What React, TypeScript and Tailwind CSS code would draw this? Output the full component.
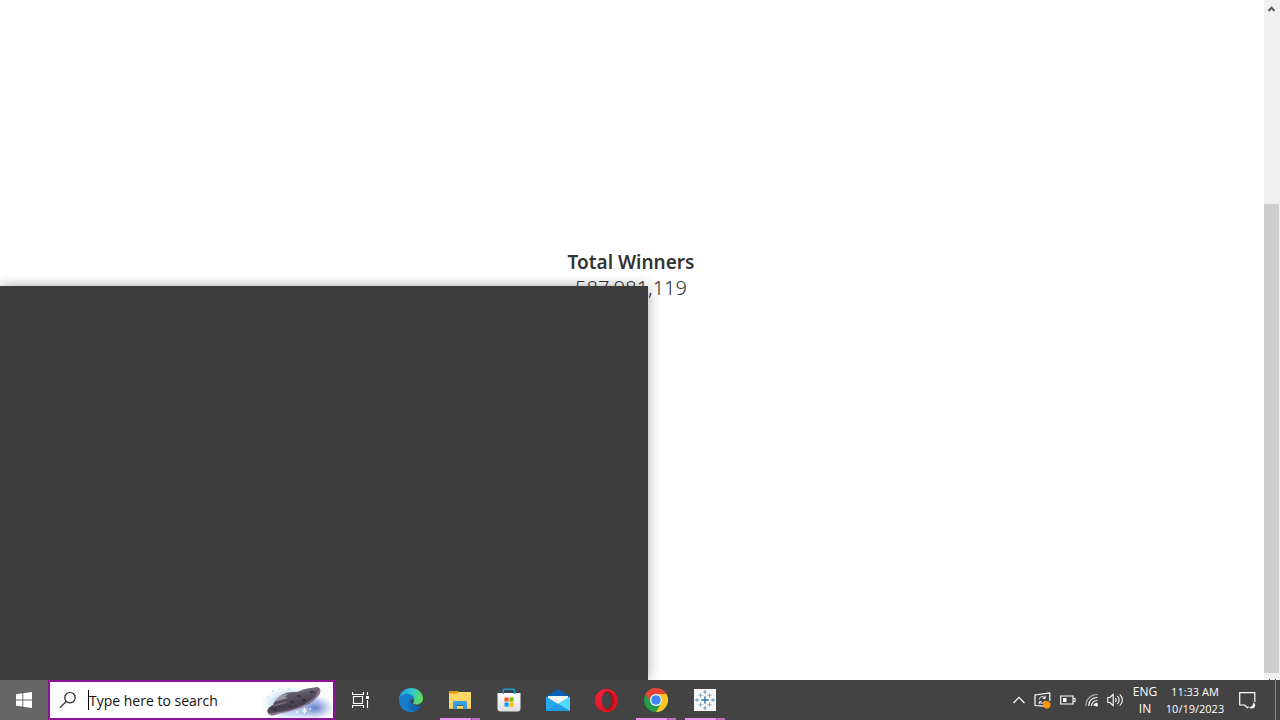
import type { ReactNode } from "react";

function WindowsLogo() {
  return (
    <svg width="16" height="16" viewBox="0 0 16 16" fill="#fff" aria-hidden="true">
      <path d="M0 2.2 6.4 1.3V7.4H0zM7.3 1.2 16 0V7.4H7.3zM0 8.4H6.4V14.6L0 13.7zM7.3 8.4H16V16L7.3 14.8z" />
    </svg>
  );
}

function SearchIcon() {
  return (
    <svg width="18" height="18" viewBox="0 0 18 18" fill="none" stroke="#222" strokeWidth="1.2" aria-hidden="true">
      <circle cx="11" cy="6.7" r="5.2" />
      <path d="M7.2 10.5 1 16.7" />
    </svg>
  );
}

function AsteroidArt() {
  return (
    <svg width="72" height="36" viewBox="0 0 72 36" className="shrink-0" aria-hidden="true">
      <defs>
        <radialGradient id="haze">
          <stop offset="0" stopColor="#7fa8dc" />
          <stop offset="0.6" stopColor="#a9cdec" stopOpacity="0.8" />
          <stop offset="1" stopColor="#fff" stopOpacity="0" />
        </radialGradient>
        <radialGradient id="hazeDeep">
          <stop offset="0" stopColor="#5f74c4" stopOpacity="0.9" />
          <stop offset="1" stopColor="#8fa5e5" stopOpacity="0" />
        </radialGradient>
        <linearGradient id="rock" x1="0.35" y1="0" x2="0.6" y2="1">
          <stop offset="0" stopColor="#8b8691" />
          <stop offset="0.3" stopColor="#5c5763" />
          <stop offset="0.65" stopColor="#413d4b" />
          <stop offset="1" stopColor="#76607f" />
        </linearGradient>
      </defs>
      <ellipse cx="34" cy="22" rx="37" ry="19" fill="url(#haze)" opacity="0.8" />
      <ellipse cx="54" cy="26" rx="20" ry="12" fill="url(#hazeDeep)" />
      <path d="M7 31C5 28 8 25 12 23 14 18 19 13 25 11 30 9 35 11 39 9 44 6 51 6 56 5 61 6 60 12 56 15 51 21 45 23 39 26 31 29 24 30 17 32 12 34 8 34 7 31Z" fill="url(#rock)" />
      <path d="M14 20C18 14 22 12 27 12L24 15 27 16 20 18Z" fill="#d1cbd3" opacity="0.55" />
      <path d="M12 24C17 22 21 22 26 20" fill="none" stroke="#b391b7" strokeWidth="1.5" opacity="0.45" />
      <path d="M8 32C16 32 22 30 29 29 39 26 48 21 55 15L59 8" fill="none" stroke="#bd93be" strokeWidth="1.6" opacity="0.65" />
      <g fill="#282631" opacity="0.55">
        <ellipse cx="14" cy="28" rx="2" ry="1.4" /><ellipse cx="31" cy="20" rx="2.2" ry="1.4" />
        <ellipse cx="38" cy="14" rx="2.5" ry="1.3" /><ellipse cx="43" cy="18" rx="2.4" ry="1.5" />
        <ellipse cx="51" cy="10" rx="2.5" ry="1.4" /><ellipse cx="29" cy="25" rx="2" ry="1" />
      </g>
      <path d="M43.5 25.5v6M41 27l5 3M46 27l-5 3" stroke="#fff" />
      <g fill="#fff"><circle cx="36" cy="30" r="0.9" /><circle cx="47" cy="34" r="0.8" /><circle cx="49" cy="27" r="0.8" /><circle cx="33" cy="34" r="0.7" /></g>
      <g fill="#a8def2"><circle cx="12" cy="9" r="1" /><circle cx="18" cy="7" r="0.8" /><circle cx="7" cy="15" r="0.8" /><circle cx="28" cy="7" r="0.8" /></g>
    </svg>
  );
}

function TaskViewIcon() {
  return (
    <svg width="17" height="16" viewBox="0 0 17 16" fill="none" stroke="#fff" aria-hidden="true">
      <path d="M.5 0V2.5H11.5V0M.5 16V13.5H11.5V16M1.5 4.5H10.5V11.5H1.5ZM15.5 0V3M15.5 8V16" strokeWidth="1.1" />
      <path d="M14 4H17V7H14Z" fill="#fff" stroke="none" />
    </svg>
  );
}

function EdgeIcon() {
  return (
    <svg width="24" height="24" viewBox="0 0 24 24" aria-hidden="true">
      <defs>
        <linearGradient id="edgeTop" x1="0" y1="0.4" x2="1" y2="0.6">
          <stop stopColor="#2696dc" /><stop offset="0.5" stopColor="#31c7cf" /><stop offset="1" stopColor="#69df4b" />
        </linearGradient>
        <linearGradient id="edgeBottom" x2="1" y2="1"><stop stopColor="#1684d4" /><stop offset="1" stopColor="#0c559e" /></linearGradient>
      </defs>
      <path d="M0 12C0 5 5 0 12 0S24 5 24 10.5C24 14 21 16.5 17.5 16.5 15 16.5 13.8 15.8 14.2 14.8 15.8 13 15 8 9.5 8 4 8 0 10 0 14Z" fill="url(#edgeTop)" />
      <path d="M0 12C1 8 4 5.8 8.3 5.8 13 5.8 16 9.5 15.3 13 14.8 11 12 10.4 10.5 12.3 7.5 16 12 21.5 20.8 20.2 17.8 23.2 15 24 12 24 5 24 0 19 0 12Z" fill="#147ecc" />
      <path d="M7.8 13.5C7.8 10.5 10 8.3 12.5 8.3 9 11 11 16 16 17.5 19 18.4 21.3 17.6 22.7 17 21.9 19.3 19 22.2 16 23.3 11 24 7.8 18.7 7.8 13.5Z" fill="url(#edgeBottom)" />
    </svg>
  );
}

function FolderIcon() {
  return (
    <svg width="22" height="18" viewBox="0 0 22 18" aria-hidden="true">
      <path d="M0 0H8.5L9.5 1H22V17.5H0Z" fill="#ffd767" />
      <path d="M0 0H8.5L9.5 1 8.5 2.5H0Z" fill="#e19b06" />
      <path d="M0 17H22v1H0Z" fill="#eaba3d" />
      <path d="M4 18V11.5Q4 10 5.5 10H16.5Q18 10 18 11.5V18H14V14H8V18Z" fill="#3c9be1" />
      <path d="M8 14H14v1H8Z" fill="#246eaa" />
    </svg>
  );
}

function StoreIcon() {
  return (
    <svg width="24" height="24" viewBox="0 0 24 24" aria-hidden="true">
      <defs><linearGradient id="bag" x2="0" y2="1"><stop stopColor="#fff" /><stop offset="1" stopColor="#dedede" /></linearGradient></defs>
      <path d="M.5 5H23.5V20.5Q23.5 23.5 20.5 23.5H3.5Q.5 23.5.5 20.5Z" fill="url(#bag)" />
      <path d="M6.3 6V2.7Q6.3 1.3 7.7 1.3H16.3Q17.7 1.3 17.7 2.7V6" fill="none" stroke="#189edc" strokeWidth="1.5" />
      <path d="M7.5 9.5H11.6V13.6H7.5Z" fill="#f25022" /><path d="M12.5 9.5H16.6V13.6H12.5Z" fill="#7fba00" />
      <path d="M7.5 14.5H11.6V18.6H7.5Z" fill="#00a4ef" /><path d="M12.5 14.5H16.6V18.6H12.5Z" fill="#ffb900" />
    </svg>
  );
}

function MailIcon() {
  return (
    <svg width="24" height="22" viewBox="0 0 24 22" aria-hidden="true">
      <path d="M0 7.5 11 .5Q12 0 13 .5L24 7.5V10H0Z" fill="#0860b4" />
      <path d="M2 7H22V18H2Z" fill="#f5f3ef" />
      <path d="M0 7.5 24 22H0Z" fill="#28a8ea" /><path d="M24 7.5V22L10.5 15.5Z" fill="#50d9ff" />
      <path d="M0 22 12 14.8 24 22Z" fill="#219be3" />
    </svg>
  );
}

function OperaIcon() {
  return (
    <svg width="23" height="23" viewBox="0 0 23 23" aria-hidden="true">
      <defs><linearGradient id="opera" x2="1" y2="1"><stop stopColor="#ff2039" /><stop offset="1" stopColor="#cf1018" /></linearGradient></defs>
      <path d="M11.5 0A11.5 11.5 0 1 0 11.5 23 11.5 11.5 0 1 0 11.5 0ZM12.2 2.5C15.3 2.5 16.8 6.5 16.8 11.5S15.3 20.5 12.2 20.5 7 17 7 11.5 9 2.5 12.2 2.5Z" fill="url(#opera)" fillRule="evenodd" />
      <path d="M8.5 4.2C10 2 13.5 1.2 16 3.6 19.8 7 19.8 16 16 19.4 13.5 21.8 10 21 8.5 18.8 11 21 16.8 19.5 16.8 11.5S11 2 8.5 4.2Z" fill="#a80f18" />
    </svg>
  );
}

function ChromeIcon() {
  return (
    <svg width="24" height="24" viewBox="0 0 24 24" aria-hidden="true">
      <circle cx="12" cy="12" r="12" fill="#239d4a" />
      <path d="M1.6 6A12 12 0 0 1 22.4 6H12A6 6 0 0 0 6.8 15Z" fill="#e94335" />
      <path d="M22.4 6A12 12 0 0 1 12 24L17.2 15A6 6 0 0 0 12 6Z" fill="#fcc524" />
      <circle cx="12" cy="12" r="6" fill="#fff" /><circle cx="12" cy="12" r="4.8" fill="#4285f4" />
    </svg>
  );
}

function TableauIcon() {
  return (
    <svg width="22" height="22" viewBox="0 0 22 22" fill="none" aria-hidden="true">
      <path d="M0 0H22V22H0Z" fill="#f7f7f7" />
      <path d="M11 7.2V14.8M7.2 11H14.8" stroke="#2278a8" strokeWidth="1.3" />
      <path d="M6.5 4V8.5M4.2 6.2H8.8M15.5 4V8.5M13.2 6.2H17.8M6.5 13.5V18M4.2 15.8H8.8M15.5 13.5V18M13.2 15.8H17.8" stroke="#8aafc7" strokeWidth="1.1" />
      <path d="M11 1V5M9.3 3H12.7M11 17V21M9.3 19H12.7M3 9.3V12.7M1 11H5M19 9.3V12.7M17 11H21" stroke="#5f97b9" />
    </svg>
  );
}

function SyncIcon() {
  return (
    <svg width="18" height="17" viewBox="0 0 18 17" fill="none" stroke="#fff" aria-hidden="true">
      <path d="M10 14.2 1 13.5V3L15.8 1V9" strokeWidth="1.2" />
      <path d="M5.2 7.5C5.8 4.4 9.2 3.8 11 6M11.2 3.8V6.4H8.7M11.1 8.7C10.2 11.6 7.1 12 5.5 10M5.3 12.2V9.7H7.8" />
      <circle cx="12.8" cy="12.8" r="3.7" fill="#ff9800" stroke="none" />
    </svg>
  );
}

function BatteryIcon() {
  return (
    <svg width="16" height="10" viewBox="0 0 16 10" fill="none" stroke="#fff" aria-hidden="true">
      <path d="M.7 1H13V9H.7ZM13 3.5H15V6.5H13" strokeWidth="1.1" /><path d="M3 3H6.5V7H3Z" fill="#fff" stroke="none" />
    </svg>
  );
}

function WifiIcon() {
  return (
    <svg width="14" height="14" viewBox="0 0 14 14" fill="none" stroke="#fff" strokeWidth="1.2" aria-hidden="true">
      <path d="M.8 13C.8 6 6 1.5 12.5 1.5" stroke="#b5b5b5" /><path d="M3.6 13C4 8 7 4.5 12.5 4.5M6.4 13C6.7 9.7 8.8 7.5 12.5 7.5M9 13C9.2 11.5 10.2 10.3 12.5 10.3" />
      <circle cx="11.5" cy="12" r="1.5" fill="#fff" stroke="none" />
    </svg>
  );
}

function SoundIcon() {
  return (
    <svg width="17" height="14" viewBox="0 0 17 14" fill="none" stroke="#fff" strokeWidth="1.1" aria-hidden="true">
      <path d="M.8 4.5H3L6.2 1.3V12.7L3 9.5H.8ZM8.2 5C9.3 6.2 9.3 7.8 8.2 9M10.4 3.2C12.7 5.4 12.7 8.6 10.4 10.8M12.7 1.3C16.3 4.7 16.3 9.3 12.7 12.7" />
    </svg>
  );
}

function NotificationIcon() {
  return (
    <svg width="17" height="17" viewBox="0 0 17 17" fill="none" aria-hidden="true">
      <path d="M15.8 10V.7H.7V13H5.5L8.5 15.8 9.5 14.5" stroke="#fff" strokeWidth="1.2" />
      <path d="M14.4 10.2A3.4 3.4 0 1 1 10 15.2C13 15 14.5 13 14.4 10.2Z" fill="#fff" />
    </svg>
  );
}

const apps: { name: string; icon: ReactNode; running: boolean }[] = [
  { name: "Microsoft Edge", icon: <EdgeIcon />, running: false },
  { name: "File Explorer", icon: <FolderIcon />, running: true },
  { name: "Microsoft Store", icon: <StoreIcon />, running: false },
  { name: "Mail", icon: <MailIcon />, running: false },
  { name: "Opera", icon: <OperaIcon />, running: false },
  { name: "Chrome", icon: <ChromeIcon />, running: true },
  { name: "Tableau", icon: <TableauIcon />, running: true },
];

function Taskbar() {
  return (
    <footer className="relative z-10 flex h-10 shrink-0 items-stretch bg-[#434343] text-white">
      <button aria-label="Start" className="grid w-12 shrink-0 place-items-center bg-[#666]"><WindowsLogo /></button>
      <div className="flex w-[287px] shrink-0 items-center overflow-hidden border-2 border-[#891596] bg-white pl-[9px]">
        <label htmlFor="search"><SearchIcon /></label>
        <span className="ml-[11px] h-5 w-px shrink-0 bg-black" />
        <input id="search" aria-label="Search" placeholder="Type here to search" className="h-full w-0 min-w-0 flex-1 bg-transparent text-sm text-black outline-none placeholder:text-[#111]" />
        <AsteroidArt />
      </div>
      <nav className="flex shrink-0">
        <button aria-label="Task View" className="grid w-[51px] place-items-center"><TaskViewIcon /></button>
        {apps.map((app) => (
          <button key={app.name} aria-label={app.name} className="relative grid w-[49px] place-items-center">
            {app.icon}
            {app.running && (
              <span className="absolute bottom-0 left-[5px] right-1 flex h-0.5">
                <span className="flex-1 bg-[#ed91f3]" />
                <span className="w-[9px] border-l border-[#8e5692] bg-[#b971be]" />
              </span>
            )}
          </button>
        ))}
      </nav>
      <div className="ml-auto flex shrink-0 items-center">
        <button aria-label="Show hidden icons" className="grid h-full w-6 place-items-center">
          <svg width="12" height="8" viewBox="0 0 12 8" fill="none" stroke="#fff" strokeWidth="1.2" aria-hidden="true"><path d="M.5 7 6 1.3 11.5 7" /></svg>
        </button>
        <button aria-label="Sync" className="grid h-full w-6 place-items-center"><SyncIcon /></button>
        <button aria-label="Battery" className="grid h-full w-[25px] place-items-center"><BatteryIcon /></button>
        <button aria-label="Network" className="grid h-full w-6 place-items-center"><WifiIcon /></button>
        <button aria-label="Volume" className="grid h-full w-[23px] place-items-center"><SoundIcon /></button>
        <button className="h-full w-9 text-center text-xs leading-[17px]">ENG<br />IN</button>
        <button className="h-full w-16 whitespace-nowrap text-center text-[11px] leading-[17px]">11:33 AM<br />10/19/2023</button>
        <button aria-label="Notifications" className="grid h-full w-10 place-items-center"><NotificationIcon /></button>
        <button aria-label="Show desktop" className="ml-2 h-full w-[5px] border-l border-[#888]" />
      </div>
    </footer>
  );
}

export default function App() {
  return (
    <div className="flex h-screen flex-col overflow-hidden bg-white font-['Open_Sans','Noto_Sans',sans-serif]">
      <div className="relative flex min-h-0 flex-1 overflow-hidden">
        <main className="flex-1 pr-0.5 pt-[249px] text-center font-['Noto_Sans',sans-serif] text-[#333]">
          <h1 className="text-[19px] font-semibold leading-[26px]">Total Winners</h1>
          <p className="text-xl font-light leading-[26px] text-[#333]">587,981,119</p>
        </main>
        <aside className="flex w-4 shrink-0 flex-col bg-[#f0f0f0]" aria-label="Page scroll">
          <div className="mr-px flex h-[204px] shrink-0 justify-center pt-1.5">
            <svg width="7" height="6" viewBox="0 0 7 6" fill="none" stroke="#555" strokeWidth="2" aria-hidden="true"><path d="M.5 5 3.5 1.7 6.5 5" /></svg>
          </div>
          <div className="mr-px flex-1 bg-[#cdcdcd]" />
          <div className="flex h-[7px] shrink-0 items-end justify-center">
            <svg width="7" height="1" viewBox="0 0 7 1" fill="#555" aria-hidden="true"><path d="M0 0H1V1H0ZM6 0H7V1H6Z" /></svg>
          </div>
        </aside>
        <div className="absolute bottom-0 left-0 top-[286px] w-[648px] bg-[#3b3b3b] shadow-[0_0_12px_rgba(0,0,0,0.35)]" />
      </div>
      <Taskbar />
    </div>
  );
}
